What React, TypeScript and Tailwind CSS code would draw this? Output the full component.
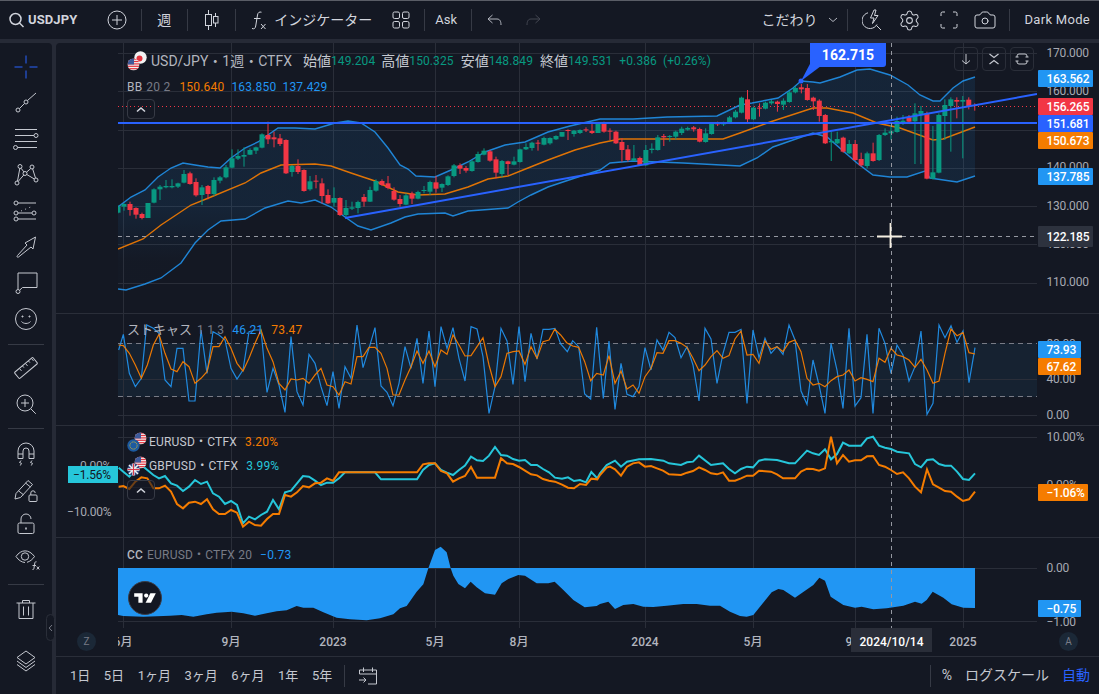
import React from "react";
import { Settings, Camera } from "lucide-react";

const GRID = "#2a2e39";
const UP = "#089981";
const DOWN = "#f23645";
const BLUE = "#2196f3";
const ORANGE = "#f57c00";
const TEAL = "#26c6da";
const ROYAL = "#2962ff";
const V_LINES = [123, 231, 333, 435, 519, 645, 753, 855, 963];

// readings are "x:y" pairs measured on the chart, shifted and scaled back to page pixels
const trace = (src: string, ox: number, oy: number) =>
  src
    .trim()
    .split(/\s+/)
    .map((p) => {
      const [x, y] = p.split(":").map(Number);
      return [ox + x / 3, oy + y / 3];
    });
const pts = (list: number[][]) => list.map((p) => p.join(",")).join(" ");

const bbUpper = [[118,207],[131,197],[145,190],[158,177],[171,168],[183,163],[195,165],[208,167],[220,168],[231,158],[245,148],[258,142],[278,128],[295,128],[315,129],[335,123],[348,121],[361,123],[375,132],[388,148],[400,165],[408,169],[416,176],[435,177],[451,170],[468,162],[485,152],[505,145],[525,142],[548,132],[570,126],[600,119],[633,119],[667,117],[717,116],[740,105],[752,103],[778,98],[793,88],[801,81],[813,82],[820,83],[840,77],[857,70],[870,69],[890,75],[908,85],[920,95],[933,101],[940,101],[953,88],[963,81],[975,77]];
const bbLower = [[118,289],[126,290],[145,284],[161,278],[181,263],[195,243],[208,230],[221,221],[245,219],[265,208],[288,201],[301,203],[315,200],[331,207],[345,217],[358,226],[371,230],[391,223],[405,217],[418,214],[445,213],[453,216],[468,211],[508,208],[518,202],[531,195],[548,187],[575,178],[600,170],[610,163],[633,161],[683,163],[740,166],[757,158],[773,147],[813,133],[827,137],[857,163],[873,175],[890,177],[907,177],[925,171],[930,178],[957,182],[975,176]];
const bbMid = [[118,249],[143,239],[161,225],[191,205],[211,197],[245,183],[261,173],[281,165],[315,164],[331,166],[351,173],[375,181],[398,192],[418,195],[445,194],[468,187],[488,179],[508,176],[528,168],[548,160],[575,150],[600,143],[620,139],[693,139],[723,139],[740,133],[770,122],[813,108],[827,108],[853,113],[877,123],[900,128],[933,140],[943,139],[975,127]];

type Candle = [number, number, number, number, number];
// up?, body top, body bottom, wick top, wick bottom
const candlesA: Candle[] = [[1,320,338,315,340],[1,312,320,310,332],[0,312,330,305,347],[0,324,344,322,356],[0,342,354,338,358],[1,309,354,309,354],[1,268,308,265,310],[1,260,268,255,300],[1,258,262,240,265],[1,258,262,238,265],[1,250,260,248,264],[1,222,248,210,250],[0,220,252,215,254],[0,246,286,235,290],[1,262,285,255,315],[0,258,282,255,298],[1,240,282,232,288],[1,232,242,228,250],[1,202,232,195,235],[1,175,203,148,205],[1,168,176,148,180],[1,165,170,142,200],[1,150,164,145,165],[1,142,152,140,162],[1,103,143,100,145],[0,105,118,65,132],[0,112,118,95,142],[0,115,132,102,138],[0,120,220,118,222],[1,198,216,195,230],[0,198,216,178,222],[0,210,273,208,275],[1,244,268,228,272],[0,242,244,225,265],[0,250,288,235,310],[0,285,310,268,312],[1,294,308,262,320],[0,294,345,292,348],[1,324,345,300,352],[1,322,326,305,330],[1,306,324,302,340],[0,291,305,282,320],[1,270,305,260,306],[1,243,272,238,275],[0,243,255,238,258],[0,250,264,228,268],[0,273,299,262,302],[0,297,312,285,320],[1,286,314,280,316],[0,281,296,275,312],[1,276,296,272,298],[1,270,273,258,280],[1,246,275,242,285],[0,247,266,228,278],[1,252,263,250,276],[1,229,255,226,258],[1,196,228,192,232],[0,196,206,190,222],[0,204,212,198,218],[1,184,213,180,215],[1,162,186,155,188],[1,152,164,145,166],[0,154,182,150,185],[0,178,218,170,235],[1,183,222,180,232],[0,184,192,182,225],[1,184,194,170,196],[1,148,186,146,188],[1,141,148,130,150],[1,128,144,125,152],[0,128,130,120,152],[1,114,134,110,136],[1,114,130,112,134],[1,108,118,106,120],[1,96,110,96,110],[0,90,93,88,120],[1,92,102,90,110],[1,90,99,88,102],[0,88,91,82,96],[0,93,99,70,102],[1,72,99,72,99]];
const candlesB: Candle[] = [[0,190,215,185,218],[0,212,215,205,240],[0,215,250,212,252],[0,246,270,235,305],[0,268,300,255,305],[1,295,302,255,303],[0,294,316,290,318],[1,270,316,255,318],[1,266,270,250,280],[1,232,270,225,272],[0,228,232,222,258],[1,228,231,225,245],[1,215,230,212,238],[1,206,219,200,225],[1,204,209,200,212],[0,202,208,198,215],[0,207,245,203,247],[1,220,246,205,248],[1,192,222,188,224],[0,190,193,185,198],[1,190,193,185,198],[1,172,190,168,192],[1,155,172,150,175],[1,113,158,110,160],[0,118,178,90,188],[1,143,178,140,180],[0,143,146,130,170],[1,128,146,125,148],[1,124,130,120,134],[0,125,132,122,155],[1,122,134,115,150],[1,97,126,92,128],[1,84,97,78,100],[0,82,88,72,100],[0,84,120,72,122],[0,113,124,110,150],[0,122,168,118,185],[0,165,250,162,252],[1,243,247,215,303],[1,237,250,215,252],[0,233,275,230,278],[1,252,280,240,282],[0,252,300,240,302],[0,297,316,278,320],[1,280,318,275,325],[0,280,303,248,305],[1,225,300,222,303],[1,218,225,205,228],[1,214,220,195,240],[1,183,216,170,218],[1,182,186,165,195],[0,172,185,165,190],[1,160,184,130,312],[1,153,162,138,312],[0,160,356,155,358],[1,337,356,198,358],[1,165,338,160,340],[1,135,168,118,240],[1,118,138,112,275],[0,120,125,112,175],[1,120,125,108,295],[0,119,140,112,148],[0,135,138,130,152]];

const stochK = [
  ...trace("176:105 190:58 208:175 226:215 244:190 260:30 280:40 297:55 315:195 333:215 351:100 369:100 387:258 405:258 423:45 441:175 459:50 477:60 495:75 513:160 531:192 549:165 567:50 585:45 603:45 621:232 639:160 657:210 675:292 693:65 711:230 729:270 747:118 765:145 783:215 801:272 819:170 837:280 855:155 873:190 891:30 909:158 927:100 945:38 963:213 981:232 999:272 1017:205 1035:95 1053:160 1071:70 1089:205 1107:48 1125:215 1143:35 1161:100 1179:38 1197:130 1215:198 1233:35 1251:42 1269:125 1287:295 1305:215 1323:40 1341:78 1359:208 1377:35 1395:200 1413:55 1431:132 1449:43 1467:43 1485:40 1502:87 1522:110 1538:77 1556:95 1574:237 1592:252 1610:37", 60, 315),
  ...trace("10:250 27:78 45:283 63:145 81:238 99:245 117:215 135:98 153:165 171:75 189:105 207:52 225:68 243:128 261:95 279:150 297:258 315:40 333:72 351:205 369:115 387:52 405:52 423:43 441:265 459:45 477:128 495:70 513:115 531:95 549:118 567:30 585:75 603:228 621:268 639:135 657:210 675:295 693:85 711:165 729:280 747:40 765:273 783:248 801:58 819:295 837:40 855:85 873:175 891:90 909:120 927:198 945:155 963:48 981:298 999:265 1017:30 1035:68 1053:32 1071:82 1089:48 1107:203 1125:98", 600, 315),
];
const stochD = [
  ...trace("176:90 190:92 208:115 226:150 244:190 262:150 280:90 297:58 315:115 333:162 351:170 369:140 387:155 405:205 423:190 441:170 459:95 477:95 495:65 513:100 531:145 549:168 567:130 585:85 603:45 621:100 639:140 657:205 675:225 693:192 711:195 729:190 747:205 765:180 783:160 801:210 819:215 837:240 855:200 873:207 891:125 909:125 927:97 945:97 963:115 981:160 999:240 1017:240 1035:195 1053:155 1071:108 1089:145 1107:108 1125:155 1143:105 1161:118 1179:60 1197:90 1215:123 1233:122 1251:95 1269:68 1287:150 1305:215 1323:185 1341:115 1359:110 1377:108 1395:148 1413:95 1431:130 1449:80 1467:75 1484:43 1502:60 1520:83 1538:93 1556:97 1574:140 1592:197 1610:175", 60, 315),
  ...trace("10:180 27:122 45:205 63:168 81:222 99:210 117:235 135:185 153:160 171:113 189:115 207:77 225:77 243:85 261:97 279:130 297:167 315:150 333:125 351:107 369:130 387:122 405:72 423:48 441:120 459:118 477:145 495:78 513:103 531:95 549:110 567:82 585:75 603:110 621:190 639:210 657:205 675:215 693:197 711:185 729:180 747:165 765:198 783:188 801:193 819:200 837:130 855:142 873:100 891:120 909:125 927:135 945:157 963:133 981:165 999:205 1017:198 1035:115 1053:42 1071:62 1089:53 1107:113 1125:117", 600, 315),
];
const gbp = [
  ...trace("176:458 190:470 208:485 226:465 244:450 262:465 280:480 297:490 315:483 333:505 351:512 369:528 387:515 405:495 423:507 441:500 459:535 477:545 495:567 513:558 531:570 549:625 567:605 585:613 603:600 621:590 639:555 657:583 675:532 693:527 711:505 729:483 747:485 765:497 783:510 801:503 819:503 837:490 855:472 945:472 963:493 1071:493 1089:465 1107:450 1125:445 1143:465 1161:473 1179:480 1197:465 1215:452 1233:425 1251:436 1269:438 1287:422 1305:396 1323:420 1341:422 1359:432 1377:437 1395:435 1413:450 1431:450 1449:462 1467:472 1485:488 1506:491 1524:487 1542:498 1560:495 1578:502 1594:471 1612:490", 60, 315),
  ...trace("0:475 20:450 45:437 63:455 81:440 117:433 153:432 190:437 207:445 243:450 261:442 279:440 297:422 333:450 369:445 387:462 405:475 423:462 441:455 459:457 477:437 495:433 531:435 567:445 585:445 621:407 639:415 657:420 675:403 693:433 711:417 729:383 747:392 783:392 801:370 819:365 837:392 855:398 873:402 891:410 927:415 945:447 963:457 981:435 999:433 1017:447 1035:452 1053:452 1071:470 1089:492 1107:495 1125:475", 600, 315),
];
const eur = [
  ...trace("176:515 190:513 208:522 226:500 244:487 262:490 280:520 297:520 315:512 333:530 351:567 369:580 387:563 405:560 423:567 441:553 459:583 477:597 495:597 513:585 531:593 549:635 567:620 585:630 603:632 621:612 639:597 657:597 675:540 693:545 711:532 729:513 747:517 765:505 783:503 801:490 819:497 837:472 1071:472 1089:448 1107:445 1125:445 1143:468 1161:475 1179:500 1197:490 1215:483 1233:456 1251:488 1305:488 1323:430 1341:445 1359:447 1377:456 1395:467 1413:478 1431:481 1449:492 1467:497 1485:500 1506:509 1524:518 1542:520 1560:507 1578:510 1594:491 1612:493", 60, 315),
  ...trace("0:480 20:458 30:455 45:463 63:482 81:455 99:445 117:442 135:455 153:453 171:460 189:467 207:478 243:480 261:473 279:468 297:457 315:465 333:475 351:478 369:472 387:497 405:497 423:490 441:482 459:482 477:467 513:470 531:478 549:490 585:490 603:470 621:461 639:462 657:467 675:460 693:365 711:445 729:420 747:440 765:436 783:436 801:424 819:423 837:450 855:455 873:465 891:477 909:472 927:490 945:515 963:532 981:463 999:508 1017:518 1035:528 1053:530 1071:545 1089:558 1107:553 1125:530", 600, 315),
];
const cc = [
  ...trace("174:240 190:243 250:245 330:242 365:240 400:245 440:238 470:233 515:230 550:235 585:242 620:235 650:229 680:226 710:213 730:218 760:218 790:232 830:248 870:253 920:256 960:250 1000:238 1020:220 1040:213 1070:170 1090:148 1105:100 1125:45 1142:35 1160:52 1172:100 1180:122 1195:147 1215:160 1232:140 1250:157 1275:175 1305:179 1325:145 1345:132 1375:120 1395:122 1430:145 1465:145 1484:140 1510:165 1540:195 1574:217 1610:213", 60, 535),
  ...trace("0:207 25:200 45:222 70:210 100:207 130:215 160:216 200:212 250:207 290:207 330:212 360:212 390:230 420:243 440:245 460:240 515:172 535:162 550:165 585:188 640:150 658:128 675:137 692:185 730:210 765:218 785:215 820:223 860:220 910:212 945:200 965:206 980:195 998:170 1030:188 1055:208 1090:218 1125:219", 600, 535),
];

const Candles = () => {
  const all = [
    ...candlesA.map((c, i) => ({ c, x: 118 + i * 6, oy: 100 })),
    ...candlesB.map((c, i) => ({ c, x: 604 + i * 5.98, oy: 60 })),
  ];
  return (
    <g>
      {all.map(({ c, x, oy }, i) => {
        const color = c[0] ? UP : DOWN;
        const top = oy + c[1] / 3;
        const bottom = oy + c[2] / 3;
        return (
          <g key={i} fill={color}>
            <rect x={x - 0.5} y={oy + c[3] / 3} width={1} height={(c[4] - c[3]) / 3} />
            <rect x={x - 2.5} y={top} width={5} height={Math.max(bottom - top, 1)} />
          </g>
        );
      })}
    </g>
  );
};

const Grid = ({ top, height, rows }: { top: number; height: number; rows: number[] }) => (
  <g stroke={GRID} strokeWidth={1}>
    {V_LINES.map((x) => (
      <line key={x} x1={x + 0.5} x2={x + 0.5} y1={top} y2={top + height} />
    ))}
    {rows.map((y) => (
      <line key={y} x1={118} x2={1037} y1={y + 0.5} y2={y + 0.5} />
    ))}
  </g>
);

const CrossV = ({ top, height }: { top: number; height: number }) => (
  <line x1={891.5} x2={891.5} y1={top} y2={top + height} stroke="#9598a1" strokeDasharray="4 4" />
);

type TagData = { y: number; text: string; bg: string; w?: number; h?: number };
type LabelData = { y: number; text: string };

// value scale, labels sit at the pixel of their value
const Axis = ({ top, labels, tags }: { top: number; labels: LabelData[]; tags: TagData[] }) => (
  <div className="relative w-[62px] shrink-0 text-[12px] tracking-[-0.2px]">
    {labels.map((l) => (
      <div
        key={l.text}
        className="absolute left-[9.500px] leading-[16px] text-[#a6a9b2] whitespace-nowrap"
        style={{ top: l.y - top - 8 }}
      >
        {l.text}
      </div>
    ))}
    {tags.map((t) => (
      <div
        key={t.text}
        className="absolute left-px flex items-center pl-[8.500px] rounded-[1px] text-white font-medium whitespace-nowrap"
        style={{ top: t.y - top, width: t.w ?? 55, height: t.h ?? 17, background: t.bg }}
      >
        {t.text}
      </div>
    ))}
  </div>
);

const Collapse = () => (
  <div className="flex h-[20px] w-[28px] items-center justify-center rounded-[4px] border border-[#363a45]">
    <svg width="12" height="7" viewBox="0 0 12 7" fill="none" stroke="#d1d4dc" strokeWidth="1.6">
      <path d="M2 5.5l4-3.5 4 3.5" />
    </svg>
  </div>
);

const Flag = ({ kind }: { kind: "jp" | "eu" | "gb" }) => (
  <svg width="20" height="20" viewBox="0 0 20 20" className="shrink-0">
    <defs>
      <clipPath id={`us-${kind}`}>
        <circle cx={kind === "jp" ? 6.5 : 13.5} cy={kind === "jp" ? 13.5 : 6.5} r="6" />
      </clipPath>
    </defs>
    {kind === "jp" && (
      <g>
        <circle cx="13.5" cy="6.5" r="6.2" fill="#f2f2f2" />
        <circle cx="12.5" cy="7.5" r="3" fill="#e5343f" />
      </g>
    )}
    {(() => {
      const x = kind === "jp" ? 0.5 : 7.5;
      const y = kind === "jp" ? 7.5 : 0.5;
      return (
        <g clipPath={`url(#us-${kind})`}>
          <rect x={x} y={y} width="12" height="12" fill="#f2f2f2" />
          {[0, 2.4, 4.8, 7.2, 9.6].map((d) => (
            <rect key={d} x={x} y={y + d} width="12" height="1.2" fill="#e5343f" />
          ))}
          <rect x={x} y={y} width="6.5" height="6" fill="#3c5a9a" />
        </g>
      );
    })()}
    {kind === "eu" && (
      <g>
        <circle cx="6.5" cy="13.5" r="6.2" fill="#1c5aa0" />
        <circle cx="6.5" cy="13.5" r="3.6" fill="none" stroke="#f5c518" strokeWidth="1" strokeDasharray="1 1.2" />
      </g>
    )}
    {kind === "gb" && (
      <g>
        <circle cx="6.5" cy="13.5" r="6.2" fill="#33457e" />
        <path d="M2 9l9 9M11 9l-9 9" stroke="#f2f2f2" strokeWidth="1.6" />
        <path d="M6.5 7.5v12M.5 13.5h12" stroke="#f2f2f2" strokeWidth="2.4" />
        <path d="M6.5 7.5v12M.5 13.5h12" stroke="#d9394a" strokeWidth="1.1" />
      </g>
    )}
  </svg>
);

const Icon = ({ size = 28, children }: { size?: number; children: React.ReactNode }) => (
  <svg width={size} height={size} viewBox={`0 0 ${size} ${size}`} fill="none" stroke="#c5c8d0" strokeWidth="1" className="block">
    {children}
  </svg>
);

const Tool = ({ h = 36, children }: { h?: number; children: React.ReactNode }) => (
  <div className="flex w-full items-center justify-center" style={{ height: h }}>
    {children}
  </div>
);

const ToolSep = () => <div className="mx-[8px] h-px w-[36px] shrink-0 bg-[#363a45]" />;

const LeftTools = () => (
  <div className="relative flex h-full w-[52px] shrink-0 flex-col items-center rounded-tr-[4px] bg-[#141823] pt-[6px]">
    <Tool>
      <Icon>
        <path stroke={ROYAL} d="M14 2.5v8M14 17.5v8M2.5 14h8M17.5 14h8" />
      </Icon>
    </Tool>
    <Tool>
      <Icon>
        <circle cx="6" cy="21" r="2" />
        <circle cx="14" cy="13" r="2" />
        <path d="M7.5 19.5l5-5M15.5 11.5L24 4" />
      </Icon>
    </Tool>
    <Tool>
      <Icon>
        <path d="M3 4.5h22M3 10.5h19M3 16.5h22M5.5 22.5H25" />
        <circle cx="24" cy="10.5" r="2" />
        <circle cx="3.5" cy="22.5" r="2" />
      </Icon>
    </Tool>
    <Tool>
      <Icon>
        <circle cx="8" cy="5.5" r="2" />
        <circle cx="20" cy="6" r="2" />
        <circle cx="5" cy="22" r="2" />
        <circle cx="13" cy="12.5" r="2" />
        <circle cx="24" cy="19" r="2" />
        <path d="M5.5 20l2.3-12.5M9 7.2l3 3.8M11.8 14l-5.6 6.4M14.8 13.5l7.5 4.5M23.5 17l-2.9-9.2M18.7 7.6l-4.2 3.6" />
      </Icon>
    </Tool>
    <Tool>
      <Icon>
        <circle cx="4" cy="6" r="2" />
        <circle cx="4" cy="16" r="2" />
        <circle cx="4" cy="22" r="2" />
        <circle cx="22" cy="16" r="2" />
        <path d="M6 6h18M6 16h14M6 22h18" />
        <path d="M9 14l12-5" strokeDasharray="1 3.5" />
      </Icon>
    </Tool>
    <Tool>
      <Icon>
        <path d="M5 23.5c0-.5.3-.8.5-1L15 12l-2-2L23.5 4 21 16l-2-2L6.5 24c-.6.4-1.5.2-1.5-.5z" />
      </Icon>
    </Tool>
    <Tool>
      <Icon>
        <path d="M10.5 18.5H25V4H6v16" />
        <path d="M7.8 21l2.7-2.5" />
        <circle cx="6" cy="22.5" r="2" />
      </Icon>
    </Tool>
    <Tool>
      <Icon>
        <circle cx="14" cy="14" r="10.5" />
        <circle cx="10.5" cy="11.5" r="0.6" fill="#c5c8d0" />
        <circle cx="17.5" cy="11.5" r="0.6" fill="#c5c8d0" />
        <path d="M9.5 16.5c2 2.6 7 2.6 9 0" />
      </Icon>
    </Tool>
    <div className="h-[7px] shrink-0" />
    <ToolSep />
    <div className="h-[5px] shrink-0" />
    <Tool>
      <Icon>
        <rect x="2" y="10" width="24" height="8" rx="1" transform="rotate(-40 14 14)" />
        <path d="M8.5 15.5l2 2.4M11.5 13l1.4 1.6M14.5 10.5l2 2.4M17.5 8l1.4 1.6M20.5 5.5l2 2.4" transform="translate(-1 -1)" />
      </Icon>
    </Tool>
    <Tool>
      <Icon>
        <circle cx="13" cy="13" r="8" />
        <path d="M18.8 18.8l5 5M13 9v8M9 13h8" />
      </Icon>
    </Tool>
    <div className="h-[6px] shrink-0" />
    <ToolSep />
    <div className="h-[7px] shrink-0" />
    <Tool h={35}>
      <Icon>
        <path d="M6 18.5V11a8 8 0 0 1 16 0v7.500h-5V11a3 3 0 0 0-6 0v7.500z" />
        <path d="M6 14h5M17 14h5M9 20.500l-1.500 2 2 .8-1.200 2.200M20 20.500l-1.500 2 2 .8-1.200 2.200" />
      </Icon>
    </Tool>
    <Tool h={35}>
      <Icon>
        <path d="M4 18.500L16 5.500l4.500 4L8.500 22.500 3 24z" />
        <path d="M6.500 15.800l5 4M13.500 8l5 4" />
        <rect x="17" y="20" width="8" height="6.500" rx="1" />
        <path d="M18.800 20v-2a2.200 2.200 0 0 1 4.400 0" />
      </Icon>
    </Tool>
    <Tool h={35}>
      <Icon>
        <rect x="6" y="13" width="16" height="10.500" rx="1.500" />
        <path d="M9 13V9a5 5 0 0 1 10 0" />
        <path d="M14 17.500v2" strokeWidth="1.600" />
      </Icon>
    </Tool>
    <Tool h={35}>
      <Icon>
        <path d="M4 11.500c5-7.500 13-7.500 18.500 0-2 3-4.500 5-7.500 5.800M4 11.500c2.500 3.700 5.500 5.700 9 6" />
        <circle cx="13" cy="11.500" r="3.700" />
        <path d="M20.500 24.500c1 .3 1.300-.3 1.500-1.500l.8-5c.2-1 .8-1.500 1.700-1.200M20.500 20.500h3.500M24.800 21.500l2.500 3M27.300 21.500l-2.500 3" />
      </Icon>
    </Tool>
    <div className="h-[8px] shrink-0" />
    <ToolSep />
    <div className="h-[6px] shrink-0" />
    <Tool>
      <Icon>
        <path d="M4.500 8h19M10.500 8V5.500h7V8M7 8v15.500h14V8M11.500 11.500v9M16.500 11.500v9" />
      </Icon>
    </Tool>
    <div className="mt-auto mb-[19px]">
      <Icon>
        <path d="M14 4l9 6.500-9 6.500-9-6.500z" />
        <path d="M5 14l9 6.500 9-6.500M5 17.500L14 24l9-6.500" />
      </Icon>
    </div>
    <div className="absolute -right-[3px] top-[571px] flex h-[27px] w-[9px] items-center justify-center rounded-[5px] border border-[#2a2e39] bg-[#141823]">
      <svg width="5" height="8" viewBox="0 0 5 8" fill="none" stroke="#787b86" strokeWidth="1">
        <path d="M4 1L1.200 4 4 7" />
      </svg>
    </div>
  </div>
);

const BarSep = ({ className }: { className: string }) => <div className={`h-[22px] w-px shrink-0 bg-[#363a45] ${className}`} />;

const TopBar = () => (
  <div className="flex h-[38px] shrink-0 items-center bg-[#141823] text-[14px] text-[#d1d4dc]">
    <svg width="18" height="18" viewBox="0 0 18 18" fill="none" stroke="#d1d4dc" strokeWidth="1.500" className="ml-[8px]">
      <circle cx="7.500" cy="8" r="5.500" />
      <path d="M11.500 12l4 4" />
    </svg>
    <span className="ml-[2px] text-[13px] font-bold tracking-[0.1px]">USDJPY</span>
    <svg width="20" height="20" viewBox="0 0 20 20" fill="none" stroke="#d1d4dc" strokeWidth="1" className="ml-[30px]">
      <circle cx="10" cy="10" r="9" />
      <path d="M10 5v10M5 10h10" />
    </svg>
    <BarSep className="ml-[14px]" />
    <span className="ml-[15px]">週</span>
    <BarSep className="ml-[16px]" />
    <svg width="16" height="22" viewBox="0 0 16 22" fill="none" stroke="#d1d4dc" strokeWidth="1" className="ml-[16px]">
      <path d="M4.500 1v20M11.500 4v14" />
      <rect x="1.500" y="5.500" width="6" height="11" fill="#141823" />
      <rect x="9.500" y="7.500" width="4.500" height="6.500" fill="#141823" />
    </svg>
    <BarSep className="ml-[15px]" />
    <svg width="15" height="20" viewBox="0 0 15 20" fill="none" stroke="#d1d4dc" strokeWidth="1" className="ml-[15px]">
      <path d="M1 18.500c2.500.8 3.300-.3 3.700-2.500l1.800-11c.4-2.400 1.800-3.500 4-2.800M3 8.500h6.500M10 14l4.500 5M14.500 14L10 19" />
    </svg>
    <span className="ml-[8px] whitespace-nowrap">インジケーター</span>
    <svg width="18" height="18" viewBox="0 0 18 18" fill="none" stroke="#d1d4dc" strokeWidth="1" className="ml-[20px]">
      <rect x="1" y="1" width="6.500" height="6.500" rx="1.500" />
      <rect x="10.500" y="1" width="6.500" height="6.500" rx="1.500" />
      <rect x="1" y="10.500" width="6.500" height="6.500" rx="1.500" />
      <rect x="10.500" y="10.500" width="6.500" height="6.500" rx="1.500" />
    </svg>
    <BarSep className="ml-[14px]" />
    <span className="ml-[10px] text-[13px]">Ask</span>
    <BarSep className="ml-[14px]" />
    <svg width="16" height="12" viewBox="0 0 16 12" fill="none" stroke="#b2b5be" strokeWidth="1" className="ml-[15px]">
      <path d="M5.500 1L1 5l4.500 4M1 5h9c3 0 4 2.500 4 6" />
    </svg>
    <svg width="16" height="12" viewBox="0 0 16 12" fill="none" stroke="#434651" strokeWidth="1" className="ml-[22px]">
      <path d="M10.500 1L15 5l-4.500 4M15 5H6c-3 0-4 2.500-4 6" />
    </svg>
    <span className="ml-auto whitespace-nowrap">こだわり</span>
    <svg width="10" height="6" viewBox="0 0 10 6" fill="none" stroke="#b2b5be" strokeWidth="1" className="ml-[11px]">
      <path d="M1 1l4 3.500L9 1" />
    </svg>
    <BarSep className="ml-[9px]" />
    <svg width="20" height="22" viewBox="0 0 20 22" fill="none" stroke="#d1d4dc" strokeWidth="1" className="ml-[14px]">
      <path d="M6 3.800A8 8 0 1 0 15 15.500M14.500 16.500l4.500 4.500" />
      <path d="M12 1L8.500 9H12l-1.500 5.500L16 6.500h-3.500L14 1z" />
    </svg>
    <Settings size={23} strokeWidth={1.1} color="#d1d4dc" className="ml-[16px]" />
    <svg width="18" height="18" viewBox="0 0 18 18" fill="none" stroke="#d1d4dc" strokeWidth="1" className="ml-[19px]">
      <path d="M1 5V2.500A1.500 1.500 0 0 1 2.500 1H5M13 1h2.500A1.500 1.500 0 0 1 17 2.500V5M17 13v2.500a1.500 1.500 0 0 1-1.500 1.500H13M5 17H2.500A1.500 1.500 0 0 1 1 15.500V13" />
    </svg>
    <Camera size={24} strokeWidth={1} color="#d1d4dc" className="ml-[15px]" />
    <BarSep className="ml-[12px]" />
    <span className="ml-[14px] mr-[9px] whitespace-nowrap text-[13px] tracking-[0.3px]">Dark Mode</span>
  </div>
);

const SmallButton = ({ children }: { children: React.ReactNode }) => (
  <div className="flex h-[24px] w-[24px] items-center justify-center rounded-[4px] border border-[#2a2e39]">{children}</div>
);

const PriceLegend = () => (
  <div className="absolute left-[9px] top-[8px] flex flex-col items-start">
    <div className="flex h-[20px] items-center whitespace-nowrap text-[12px] text-[#c5c8d0]">
      <Flag kind="jp" />
      <span className="ml-[4px] text-[14px] text-[#b2b5be]">USD/JPY・1週・CTFX</span>
      <span className="ml-[11px] text-[14px]">始値</span>
      <span className="tracking-[0.1px] text-[#089981]">149.204</span>
      <span className="ml-[6px] text-[14px]">高値</span>
      <span className="tracking-[0.1px] text-[#089981]">150.325</span>
      <span className="ml-[7px] text-[14px]">安値</span>
      <span className="tracking-[0.1px] text-[#089981]">148.849</span>
      <span className="ml-[7px] text-[14px]">終値</span>
      <span className="tracking-[0.1px] text-[#089981]">149.531</span>
      <span className="ml-[7px] tracking-[0.1px] text-[#089981]">+0.386</span>
      <span className="ml-[6px] tracking-[0.1px] text-[#089981]">(+0.26%)</span>
    </div>
    <div className="mt-[7px] flex h-[18px] items-center whitespace-nowrap text-[12px] tracking-[0.2px]">
      <span className="text-[#b2b5be]">BB</span>
      <span className="ml-[4px] text-[#787b86]">20 2</span>
      <span className="ml-[9px] text-[#f57c00]">150.640</span>
      <span className="ml-[7px] text-[#2196f3]">163.850</span>
      <span className="ml-[6px] text-[#2196f3]">137.429</span>
    </div>
    <div className="mt-[3px]">
      <Collapse />
    </div>
  </div>
);

const PricePane = () => (
  <div className="flex h-[270px] shrink-0">
    <div className="w-[62px] shrink-0" />
    <div className="relative w-[919px] shrink-0 overflow-hidden">
      <svg width="919" height="270" viewBox="118 43 919 270" fill="none" className="block">
        <defs>
          <linearGradient id="bandFade" gradientUnits="userSpaceOnUse" x1="0" x2="0" y1="205" y2="262">
            <stop offset="0" stopColor="#2196f3" stopOpacity="0.1" />
            <stop offset="1" stopColor="#2196f3" stopOpacity="0.01" />
          </linearGradient>
        </defs>
        <Grid top={43} height={270} rows={[53, 91, 130, 168, 206, 244, 283]} />
        <polygon points={pts([...bbUpper, ...[...bbLower].reverse()])} fill="url(#bandFade)" />
        <line x1={118} x2={1037} y1={106.5} y2={106.5} stroke={DOWN} strokeDasharray="1 3" />
        <polyline points={pts(bbUpper)} stroke={BLUE} strokeWidth="1.400" strokeOpacity="0.85" />
        <polyline points={pts(bbLower)} stroke={BLUE} strokeWidth="1.400" strokeOpacity="0.85" />
        <polyline points={pts(bbMid)} stroke={ORANGE} strokeWidth="1.400" strokeOpacity="0.9" />
        <Candles />
        <line x1={118} x2={1037} y1={123} y2={123} stroke={ROYAL} strokeWidth="2" />
        <line x1={345} x2={1037} y1={218} y2={94} stroke={ROYAL} strokeWidth="2" />
        <polygon points="801,81 821,66 811,62" fill={ROYAL} />
        <circle cx={801} cy={81} r={2.5} fill={ROYAL} />
        <CrossV top={43} height={270} />
        <line x1={118} x2={1037} y1={236.5} y2={236.5} stroke="#9598a1" strokeDasharray="4 4" />
        <path d="M877 236.500h25M890.500 223v25" stroke="#f5efe2" strokeWidth="1.800" />
      </svg>
      <PriceLegend />
      <div className="absolute left-[692px] top-0 flex h-[24px] w-[76px] items-center justify-center rounded-b-[3px] bg-[#2962ff] text-[14px] font-bold text-white">
        162.715
      </div>
      <div className="absolute right-[3px] top-[4px] flex gap-[4px]">
        <SmallButton>
          <svg width="14" height="14" viewBox="0 0 14 14" fill="none" stroke="#c5c8d0" strokeWidth="1">
            <path d="M7 2v10M3 8.500L7 12l4-3.500" />
          </svg>
        </SmallButton>
        <SmallButton>
          <svg width="14" height="14" viewBox="0 0 14 14" fill="none" stroke="#c5c8d0" strokeWidth="1.200">
            <path d="M2.500 2L7 5.500 11.500 2M2.500 12L7 8.500l4.500 3.500" />
          </svg>
        </SmallButton>
        <SmallButton>
          <svg width="14" height="14" viewBox="0 0 14 14" fill="none" stroke="#c5c8d0" strokeWidth="1">
            <path d="M2 5V4a2 2 0 0 1 2-2h6a2 2 0 0 1 2 2v1M2 9v1a2 2 0 0 0 2 2h6a2 2 0 0 0 2-2V9M.5 5h3M10.500 5h3M.5 9h3M10.500 9h3" />
          </svg>
        </SmallButton>
      </div>
    </div>
    <Axis
      top={43}
      labels={[
        { y: 53, text: "170.000" },
        { y: 91, text: "160.000" },
        { y: 167, text: "140.000" },
        { y: 206, text: "130.000" },
        { y: 244, text: "120.000" },
        { y: 282, text: "110.000" },
      ]}
      tags={[
        { y: 70, text: "163.562", bg: BLUE },
        { y: 98, text: "156.265", bg: DOWN },
        { y: 115, text: "151.681", bg: ROYAL },
        { y: 132, text: "150.673", bg: ORANGE },
        { y: 168, text: "137.785", bg: BLUE },
        { y: 226, text: "122.185", bg: "#2d323e", h: 21 },
      ]}
    />
  </div>
);

const StochPane = () => (
  <div className="flex h-[111px] shrink-0">
    <div className="w-[62px] shrink-0" />
    <div className="relative w-[919px] shrink-0 overflow-hidden">
      <svg width="919" height="111" viewBox="118 314 919 111" fill="none" className="block">
        <rect x={118} y={343} width={919} height={54} fill="#162231" />
        <Grid top={314} height={111} rows={[379, 415]} />
        <line x1={118} x2={1037} y1={343.5} y2={343.5} stroke="#787b86" strokeDasharray="5 4" />
        <line x1={118} x2={1037} y1={396.5} y2={396.5} stroke="#787b86" strokeDasharray="5 4" />
        <polyline points={pts(stochK)} stroke={BLUE} strokeWidth="1.200" strokeOpacity="0.9" />
        <polyline points={pts(stochD)} stroke={ORANGE} strokeWidth="1.200" strokeOpacity="0.95" />
        <CrossV top={314} height={111} />
      </svg>
      <div className="absolute left-[9px] top-[7px] flex h-[18px] items-center whitespace-nowrap text-[12px] tracking-[0.2px]">
        <span className="text-[13px] tracking-normal text-[#b2b5be]">ストキャス</span>
        <span className="ml-[5px] text-[#787b86]">1 1 3</span>
        <span className="ml-[8px] text-[#2196f3]">46.21</span>
        <span className="ml-[8px] text-[#f57c00]">73.47</span>
      </div>
    </div>
    <Axis
      top={314}
      labels={[
        { y: 344, text: "80.00" },
        { y: 379, text: "40.00" },
        { y: 415, text: "0.00" },
      ]}
      tags={[
        { y: 341, text: "73.93", bg: BLUE, w: 43 },
        { y: 358, text: "67.62", bg: ORANGE, w: 43 },
      ]}
    />
  </div>
);

const ComparePane = () => (
  <div className="flex h-[111px] shrink-0">
    <div className="relative w-[62px] shrink-0 text-[12px] tracking-[-0.2px] text-[#a6a9b2]">
      <div className="absolute left-[24px] top-[32px] leading-[16px]">0.00%</div>
      <div className="absolute left-[11px] top-[78px] leading-[16px]">−10.00%</div>
      <div className="absolute left-[12px] top-[40px] flex h-[17px] w-[50px] items-center pl-[5px] text-[#131722] bg-[#26c6da]">−1.56%</div>
    </div>
    <div className="relative w-[919px] shrink-0 overflow-hidden">
      <svg width="919" height="111" viewBox="118 426 919 111" fill="none" className="block">
        <Grid top={426} height={111} rows={[437, 487]} />
        <polyline points={pts(gbp)} stroke={TEAL} strokeWidth="2" />
        <polyline points={pts(eur)} stroke={ORANGE} strokeWidth="2" />
        <CrossV top={426} height={111} />
      </svg>
      <div className="absolute left-[9px] top-[6px] flex flex-col items-start gap-[4px] whitespace-nowrap text-[12px] tracking-[0.2px]">
        <div className="flex h-[20px] items-center">
          <Flag kind="eu" />
          <span className="ml-[2px] text-[#c5c8d0]">EURUSD・CTFX</span>
          <span className="ml-[8px] text-[#f57c00]">3.20%</span>
        </div>
        <div className="flex h-[20px] items-center">
          <Flag kind="gb" />
          <span className="ml-[2px] text-[#c5c8d0]">GBPUSD・CTFX</span>
          <span className="ml-[8px] text-[#26c6da]">3.99%</span>
        </div>
        <div className="bg-[#141823]/60">
          <Collapse />
        </div>
      </div>
    </div>
    <Axis
      top={426}
      labels={[
        { y: 437, text: "10.00%" },
        { y: 485, text: "0.00%" },
      ]}
      tags={[{ y: 484, text: "−1.06%", bg: ORANGE, w: 50 }]}
    />
  </div>
);

const CcPane = () => (
  <div className="flex h-[90px] shrink-0">
    <div className="w-[62px] shrink-0" />
    <div className="relative w-[919px] shrink-0 overflow-hidden">
      <svg width="919" height="90" viewBox="118 538 919 90" fill="none" className="block">
        <Grid top={538} height={90} rows={[568, 621]} />
        <polygon points={pts([[118, 568], ...cc, [975, 568]])} fill={BLUE} />
        <CrossV top={538} height={90} />
      </svg>
      <div className="absolute left-[9px] top-[8px] flex h-[18px] items-center whitespace-nowrap text-[12px] tracking-[0.2px]">
        <span className="font-medium text-[#b2b5be]">CC</span>
        <span className="ml-[4px] text-[#787b86]">EURUSD・CTFX 20</span>
        <span className="ml-[8px] text-[#2196f3]">−0.73</span>
      </div>
      <div className="absolute left-[10px] top-[43px] flex h-[34px] w-[34px] items-center justify-center rounded-full border border-[#3a3e4a] bg-[#131722]">
        <svg width="22" height="12" viewBox="0 0 36 20" fill="#fff">
          <path d="M0 2h14v16H7V8H0z" />
          <circle cx="20" cy="6" r="3.500" />
          <path d="M27 2h9l-8 16h-9z" />
        </svg>
      </div>
    </div>
    <Axis
      top={538}
      labels={[
        { y: 568, text: "0.00" },
        { y: 622, text: "−1.00" },
      ]}
      tags={[{ y: 600, text: "−0.75", bg: BLUE, w: 43 }]}
    />
  </div>
);

const TIME_LABELS = [
  { x: 123, text: "6月" },
  { x: 231, text: "9月" },
  { x: 333, text: "2023" },
  { x: 435, text: "5月" },
  { x: 519, text: "8月" },
  { x: 645, text: "2024" },
  { x: 753, text: "5月" },
  { x: 855, text: "9月" },
  { x: 963, text: "2025" },
];

const Badge = ({ text }: { text: string }) => (
  <div className="flex h-[19px] w-[19px] items-center justify-center rounded-full bg-[#1b2837] text-[10px] text-[#787b86]">{text}</div>
);

const TimeAxis = () => (
  <div className="flex h-[28px] shrink-0 text-[12px] text-[#b2b5be]">
    <div className="flex w-[62px] shrink-0 items-center pb-[1px] pl-[21px]">
      <Badge text="Z" />
    </div>
    <div className="relative w-[919px] shrink-0 overflow-hidden">
      {TIME_LABELS.map((t) => (
        <span key={t.x} className="absolute top-[6px] -translate-x-1/2 font-medium leading-[16px]" style={{ left: t.x - 118 }}>
          {t.text}
        </span>
      ))}
      <div className="absolute left-[733px] top-0 flex h-[24px] w-[81px] items-center justify-center bg-[#2a2e39] pt-[3px] font-medium text-white">
        2024/10/14
      </div>
    </div>
    <div className="flex w-[62px] shrink-0 items-center pb-[1px] pl-[22px]">
      <Badge text="A" />
    </div>
  </div>
);

const BottomBar = () => (
  <div className="flex h-[37px] shrink-0 items-center pl-[14px] pr-[9px] text-[13px] text-[#c5c8d0]">
    <div className="flex items-center gap-[13.500px] whitespace-nowrap">
      <span>1日</span>
      <span>5日</span>
      <span>1ヶ月</span>
      <span>3ヶ月</span>
      <span>6ヶ月</span>
      <span>1年</span>
      <span>5年</span>
    </div>
    <div className="ml-[12px] h-[22px] w-px bg-[#363a45]" />
    <svg width="20" height="20" viewBox="0 0 20 20" fill="none" stroke="#c5c8d0" strokeWidth="1" className="ml-[13px]">
      <path d="M1.500 8V4h17v14H10M5.500 1.500V6M14.500 1.500V6M1.500 8h17M1 14h7M5.500 11.500L8 14l-2.500 2.500" />
    </svg>
    <div className="ml-auto h-[22px] w-px bg-[#363a45]" />
    <span className="ml-[11px] text-[14px]">%</span>
    <span className="ml-[13px] whitespace-nowrap text-[14px]">ログスケール</span>
    <span className="ml-[13px] whitespace-nowrap text-[14px] text-[#2962ff]">自動</span>
  </div>
);

const Divider = () => <div className="h-px shrink-0 bg-[#2a2e39]" />;

export default function App() {
  return (
    <div className="flex h-[694px] w-[1099px] flex-col overflow-hidden border-t border-t-[#5a5d66] bg-[#262a36] font-[Roboto,'Noto_Sans_CJK_JP',sans-serif]">
      <TopBar />
      <div className="mt-[4px] flex min-h-0 flex-1 gap-[4px]">
        <LeftTools />
        <div className="flex min-w-0 flex-1 flex-col overflow-hidden rounded-tl-[4px] bg-[#141823]">
          <PricePane />
          <Divider />
          <StochPane />
          <Divider />
          <ComparePane />
          <Divider />
          <CcPane />
          <TimeAxis />
          <Divider />
          <BottomBar />
        </div>
      </div>
    </div>
  );
}
